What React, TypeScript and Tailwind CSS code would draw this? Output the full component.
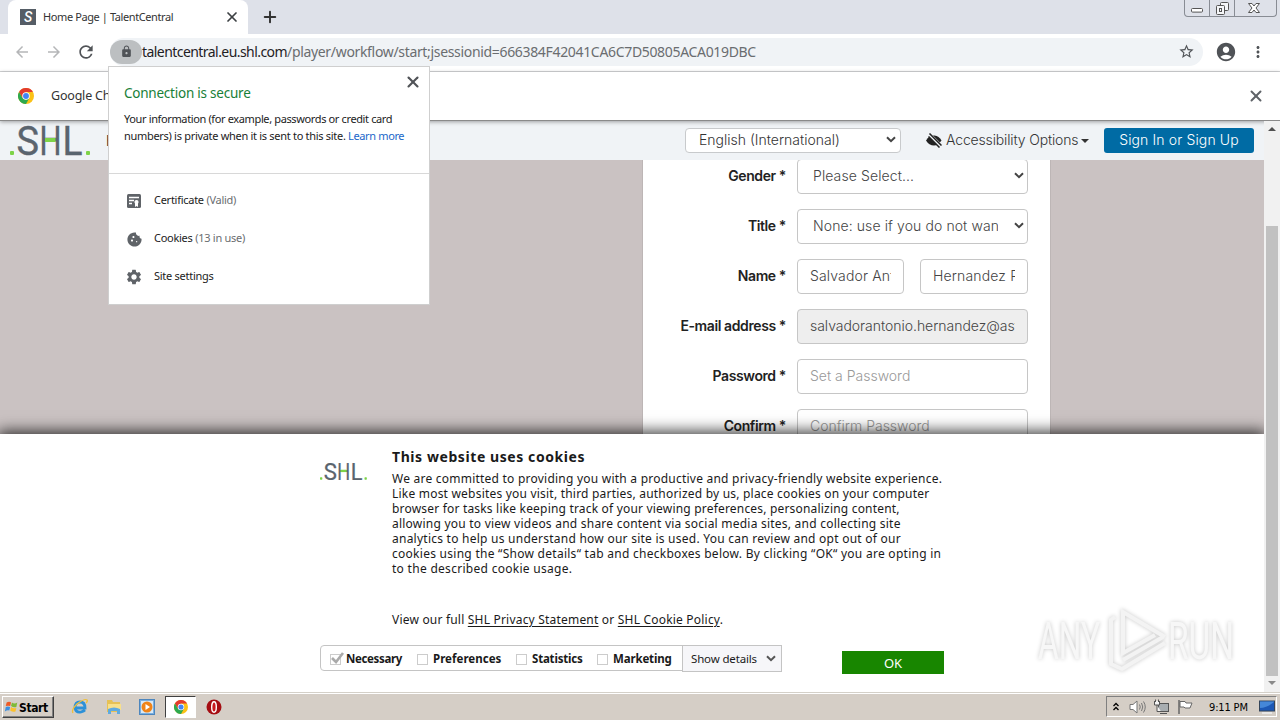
import type { ReactNode } from "react"
import clsx from "clsx"
import {
  MdAccountCircle,
  MdArrowBack,
  MdArrowForward,
  MdCookie,
  MdLock,
  MdMoreVert,
  MdRefresh,
  MdSettings,
  MdStarBorder,
} from "react-icons/md"
import { Plus, X } from "lucide-react"

const ui = "font-['Noto_Sans',sans-serif]"

function ShlLogo({ className }: { className: string }) {
  return (
    <svg viewBox="0 0 82 32" className={className} aria-label="SHL">
      <g fill="#5a646e" stroke="#5a646e" strokeWidth=".4" fontFamily="Roboto, sans-serif" fontSize="41">
        <text x="6.500" y="30" textLength="22.500" lengthAdjust="spacingAndGlyphs">S</text>
        <text x="29.500" y="30" textLength="22" lengthAdjust="spacingAndGlyphs">H</text>
        <text x="52.500" y="30" textLength="20" lengthAdjust="spacingAndGlyphs">L</text>
      </g>
      <rect x="35" y="13" width="10.500" height="4" fill="#7ed348" />
      <rect x="0" y="26" width="4" height="4" rx="1" fill="#7ed348" />
      <rect x="76" y="26" width="4" height="4" rx="1" fill="#7ed348" />
    </svg>
  )
}

function ChromeIcon({ className }: { className: string }) {
  return (
    <svg viewBox="0 0 24 24" className={className}>
      <circle cx="12" cy="12" r="12" fill="#fbc116" />
      <path d="M12 6 H22.4 A12 12 0 0 0 1.6 6 L6.8 15 Z" fill="#e33b2e" />
      <path d="M1.6 6 L6.8 15 L12 17.5 L17 15 L12 24 A12 12 0 0 1 1.6 6 Z" fill="#2da94f" />
      <circle cx="12" cy="12" r="5.6" fill="#fff" />
      <circle cx="12" cy="12" r="4.4" fill="#4285f4" />
    </svg>
  )
}

function Chevron({ className }: { className?: string }) {
  return (
    <svg viewBox="0 0 10 7" className={clsx("h-[7px] w-[10px] shrink-0", className)}>
      <path d="M1 1.2 L5 5.2 L9 1.2" fill="none" stroke="currentColor" strokeWidth="2" />
    </svg>
  )
}

function TabStrip() {
  return (
    <div className="flex h-[34px] shrink-0 bg-[#dee1e9]">
      <div className="ml-2 flex w-[240px] items-center rounded-t-lg bg-white pl-3">
        <div className="flex size-4 items-center justify-center bg-[#555d66] font-['Roboto',sans-serif] text-[14px] leading-none font-medium text-white italic">S</div>
        <span className={clsx(ui, "ml-[7px] w-[140px] text-[11px] tracking-[-0.4px] whitespace-nowrap text-[#333]")}>Home Page | TalentCentral</span>
        <X className="ml-[41px] size-4 text-[#3c4043]" strokeWidth={2.6} />
      </div>
      <Plus className="mt-2 ml-[13px] size-[18px] text-[#333]" strokeWidth={2.6} />
      <div className="mr-[3px] ml-auto flex h-[17px] w-[93px] overflow-hidden rounded-b border border-t-0 border-[#888c94] text-[#555]">
        <div className="flex w-[25px] items-center justify-center border-r border-[#888c94]">
          <svg viewBox="0 0 12 5" className="mt-1 h-[5px] w-3"><rect x=".5" y=".5" width="11" height="3.6" rx="1" fill="#fff" stroke="currentColor" /></svg>
        </div>
        <div className="flex w-[25px] items-center justify-center border-r border-[#888c94]">
          <svg viewBox="0 0 13 13" className="h-[13px] w-[13px]" fill="#f5f6f8" stroke="currentColor"><rect x="4.5" y=".5" width="8" height="8" rx="1" /><rect x=".5" y="3.5" width="8" height="9" rx="1" /><rect x="3.5" y="6.5" width="2" height="3" /></svg>
        </div>
        <div className="flex flex-1 items-center justify-center pr-[3px]">
          <svg viewBox="0 0 12 10" className="h-[10px] w-3"><path d="M.5 .5H4L6 3 8 .5H11.500L8 5 11.500 9.500H8L6 7 4 9.500H.5L4 5Z" fill="#fff" stroke="currentColor" /></svg>
        </div>
      </div>
    </div>
  )
}

function Toolbar() {
  return (
    <div className="flex h-[38px] shrink-0 items-center border-b border-[#d4d5d7] bg-white pb-[2px] pl-[13px]">
      <MdArrowBack className="size-[18px] text-[#b5b6b8]" />
      <MdArrowForward className="ml-[14px] size-[18px] text-[#b5b6b8]" />
      <MdRefresh className="ml-[13px] size-5 text-[#505357]" />
      <div className="ml-[14px] flex h-7 w-[1093px] items-center rounded-full bg-[#f0f3f6]">
        <div className="flex h-6 w-[32px] items-center justify-center rounded-full bg-[#bcbfc1]">
          <MdLock className="size-[13px] text-[#505357]" />
        </div>
        <p className={clsx(ui, "text-[14px] whitespace-nowrap text-[#6a6d70]")}>
          <span className="tracking-[-0.56px] text-[#1f2124]">talentcentral.eu.shl.com</span>
          <span className="tracking-[-0.33px]">/player/workflow/start;jsessionid=666384F42041CA6C7D50805ACA019DBC</span>
        </p>
        <MdStarBorder className="mr-2 ml-auto size-[17px] text-[#505357]" />
      </div>
      <MdAccountCircle className="ml-[12px] size-[22px] text-[#505357]" />
      <MdMoreVert className="ml-[12px] size-[18px] text-[#505357]" />
    </div>
  )
}

function InfoBar() {
  return (
    <div className="relative z-10 flex h-[49px] shrink-0 items-center border-b border-[#8a8a8a] bg-white pr-[15px] pl-[18px] shadow-[0_1px_4px_rgba(0,0,0,0.35)]">
      <ChromeIcon className="size-4" />
      <span className={clsx(ui, "ml-[17px] text-[12.500px] tracking-[-0.2px] whitespace-nowrap text-[#333]")}>Google Chrome</span>
      <X className="ml-auto size-[18px] text-[#5f6368]" strokeWidth={2.6} />
    </div>
  )
}

function SiteHeader() {
  return (
    <header className="flex h-[39px] shrink-0 items-center bg-[#f0f3f6] pl-[10px] font-['Inter',sans-serif] text-[14px] text-[#333]">
      <ShlLogo className="h-8 w-[82px]" />
      <span className="ml-[14px] w-4 overflow-hidden">Home</span>
      <div className="ml-[563px] flex h-[25px] w-[216px] items-center justify-between rounded-[4px] border border-[#c8cacc] bg-white pr-1 pb-0.5 pl-[13px] font-light">
        <span>English (International)</span>
        <Chevron className="text-[#444]" />
      </div>
      {/* low vision: solid eye crossed by two diagonal bars */}
      <svg viewBox="0 0 16 15" className="ml-[25px] h-[15px] w-4 shrink-0">
        <path d="M0 7.500Q3.500 2 8.500 2.500Q13 3 15.500 7.500Q12 12.500 8 12.500Q3 12.500 0 7.500Z" fill="#222" />
        <path d="M3 1L15 13" stroke="#f0f3f6" strokeWidth="3.600" />
        <path d="M3.500 .5L15.500 12.500M2.500 3.500L13.500 14.500" stroke="#222" strokeWidth="1.500" />
      </svg>
      <span className="mb-0.5 ml-1 w-[133px] font-light tracking-[-0.15px] whitespace-nowrap">Accessibility Options</span>
      <svg viewBox="0 0 8 4" className="ml-[2px] h-1 w-2 shrink-0"><path d="M0 0H8L4 4Z" fill="#333" /></svg>
      <div className="ml-[15px] flex h-[25px] w-[150px] items-center justify-center rounded-[3px] bg-[#006ba4] pb-0.5 font-light tracking-[0.13px] text-white">Sign In or Sign Up</div>
    </header>
  )
}

const box = "flex h-[35px] items-center overflow-hidden rounded-[4px] border border-[#c6c6c6] pb-0.5 whitespace-nowrap"

function Row({ label, children }: { label: string; children: ReactNode }) {
  return (
    <div className="flex items-center">
      <span className="w-[143px] pb-0.5 text-right text-[14px] font-semibold tracking-[-0.4px] text-[#222]">{label} *</span>
      <div className="ml-[11px] flex w-[231px] gap-4">{children}</div>
    </div>
  )
}

function Select({ value }: { value: string }) {
  return (
    <div className={clsx(box, "w-full justify-between bg-white pr-[3px] pl-[15px]")}>
      <span className="w-[185px] overflow-hidden tracking-[0.1px]">{value}</span>
      <Chevron className="text-[#444]" />
    </div>
  )
}

function Field({ value, className }: { value: string; className: string }) {
  return (
    <div className={clsx(box, "px-3", className)}>
      <span className="w-full overflow-hidden">{value}</span>
    </div>
  )
}

function RegistrationForm() {
  return (
    <main className="flex h-[274px] shrink-0 overflow-hidden bg-[#cac2c2] pl-[642px]">
      <form className="-mt-px flex h-[290px] w-[409px] shrink-0 flex-col gap-[15px] border-x border-[#bdb6b6] bg-white font-['Inter',sans-serif] text-[14px] font-light text-[#444]">
        <Row label="Gender"><Select value="Please Select..." /></Row>
        <Row label="Title"><Select value="None: use if you do not want" /></Row>
        <Row label="Name">
          <Field value="Salvador Antonio" className="w-[107px] bg-white tracking-[0.15px]" />
          <Field value="Hernandez Ramos" className="w-[108px] bg-white tracking-[0.15px]" />
        </Row>
        <Row label="E-mail address"><Field value="salvadorantonio.hernandez@astra" className="w-full bg-[#eee] tracking-[-0.03px]" /></Row>
        <Row label="Password"><Field value="Set a Password" className="w-full bg-white text-[#999]" /></Row>
        <Row label="Confirm"><Field value="Confirm Password" className="w-full bg-white text-[#999]" /></Row>
      </form>
    </main>
  )
}

const cookieLines = [
  { text: "We are committed to providing you with a productive and privacy-friendly website experience.", track: "tracking-[0.23px]" },
  { text: "Like most websites you visit, third parties, authorized by us, place cookies on your computer", track: "tracking-[0.21px]" },
  { text: "browser for tasks like keeping track of your viewing preferences, personalizing content,", track: "tracking-[0.19px]" },
  { text: "allowing you to view videos and share content via social media sites, and collecting site", track: "tracking-[0.23px]" },
  { text: "analytics to help us understand how our site is used. You can review and opt out of our", track: "tracking-[0.245px]" },
  { text: "cookies using the “Show details“ tab and checkboxes below. By clicking “OK“ you are opting in", track: "tracking-[0.27px]" },
  { text: "to the described cookie usage.", track: "tracking-[0.29px]" },
]

const cookieTypes = [
  { name: "Necessary", checked: true, width: "w-[87px]", track: "tracking-[-0.35px]" },
  { name: "Preferences", checked: false, width: "w-[99px]", track: "tracking-[0.03px]" },
  { name: "Statistics", checked: false, width: "w-[81px]", track: "tracking-[-0.2px]" },
  { name: "Marketing", checked: false, width: "w-[81px]", track: "tracking-[-0.15px]" },
]

function CookieBanner() {
  return (
    <section className={clsx(ui, "relative z-10 flex h-[258px] shrink-0 flex-col bg-white pl-[320px] text-[12px] text-[#1a1a1a] shadow-[0_-1px_14px_2px_rgba(0,0,0,0.75)]")}>
      <div className="flex h-[211px] items-start">
        <ShlLogo className="mt-[28px] h-[19px] w-[48px]" />
        <div className="ml-6 whitespace-nowrap">
          <h2 className="mt-[13px] text-[14px] leading-5 font-bold tracking-[0.58px]">This website uses cookies</h2>
          <div className="mt-1">
            {cookieLines.map((l) => (
              <p key={l.text} className={clsx("leading-[15px]", l.track)}>{l.text}</p>
            ))}
          </div>
          <p className="mt-9 leading-[15px] tracking-[0.2px]">
            View our full <a className="underline underline-offset-2">SHL Privacy Statement</a> or <a className="underline underline-offset-2">SHL Cookie Policy</a>.
          </p>
        </div>
      </div>
      <div className="flex items-start">
        <div className="flex h-[26px] w-[363px] items-center rounded-l-[4px] border border-[#c4c4c4] pt-0.5 pl-[9px]">
          {cookieTypes.map((c) => (
            <div key={c.name} className={clsx("flex items-center", c.width)}>
              <span className="relative size-[11px] border border-[#ccc] bg-white">
                {c.checked && (
                  <svg viewBox="0 0 14 12" className="absolute -top-[3px] left-0 h-3 w-[14px]"><path d="M1 6L5 10 12 1" fill="none" stroke="#aaa" strokeWidth="2.600" /></svg>
                )}
              </span>
              <span className={clsx("ml-[5px] text-[11.5px] font-bold whitespace-nowrap", c.track)}>{c.name}</span>
            </div>
          ))}
        </div>
        <div className="-ml-px flex h-[27px] w-[100px] items-center justify-between border border-[#c4c4c4] bg-[#f6f6f9] pr-[5px] pl-2 text-[11.5px] tracking-[-0.15px] whitespace-nowrap">
          Show details <Chevron className="text-[#555]" />
        </div>
        <div className="mt-[6px] ml-[60px] flex h-[23px] w-[102px] items-center justify-center bg-[#188600] pt-0.5 text-[13px] text-white">OK</div>
      </div>
    </section>
  )
}

function Scrollbar() {
  return (
    <div className="relative z-20 flex w-4 flex-col items-center bg-[#f1f1f1]">
      <svg viewBox="0 0 8 4" className="mt-[6px] h-1 w-2"><path d="M0 4H8L4 0Z" fill="#505050" /></svg>
      <div className="mt-[95px] h-[450px] w-3 bg-[#c1c1c1]" />
      <svg viewBox="0 0 8 4" className="mt-[5px] h-1 w-2"><path d="M0 0H8L4 4Z" fill="#8a8a8a" /></svg>
    </div>
  )
}

const popoverItems = [
  { icon: <svg viewBox="0 0 14 14" className="size-[14px]"><rect width="14" height="14" rx="1.500" fill="#5f6368" /><path d="M2 3.500H12M2 6.500H7M2 9.500H5" stroke="#fff" strokeWidth="1.300" /><circle cx="9.500" cy="8" r="2.100" fill="#fff" /><path d="M8 9H11V13L9.500 12 8 13Z" fill="#fff" /></svg>, label: "Certificate", note: "(Valid)" },
  { icon: <MdCookie className="size-[17px]" />, label: "Cookies", note: "(13 in use)" },
  { icon: <MdSettings className="size-[18px]" />, label: "Site settings", note: "" },
]

function SecurityPopover() {
  return (
    <div className={clsx(ui, "absolute top-[66px] left-[108px] z-30 flex h-[239px] w-[322px] flex-col border border-[#cfcfcf] bg-white text-[11px] text-[#222]")}>
      <div className="flex h-[107px] border-b border-[#d8d8d8] pl-[15px]">
        <div className="w-[280px] pt-[17px] whitespace-nowrap">
          <h3 className="text-[13.500px] leading-[19px] tracking-[-0.23px] text-[#188038]">Connection is secure</h3>
          <p className="mt-[7px] leading-[17px] tracking-[-0.37px]">
            Your information (for example, passwords or credit card
            <br />
            <span className="tracking-[-0.3px]">numbers) is private when it is sent to this site. </span>
            <a className="text-[#1a66c9]">Learn more</a>
          </p>
        </div>
        <X className="mt-[6px] size-[18px] text-[#505357]" strokeWidth={2.8} />
      </div>
      <ul className="flex flex-col pt-2">
        {popoverItems.map((item) => (
          <li key={item.label} className="flex h-[38px] items-center pl-4 tracking-[-0.27px]">
            <span className="flex w-[18px] items-center justify-center text-[#5f6368]">{item.icon}</span>
            <span className="mb-0.5 ml-[11px]">{item.label} <span className="text-[#6a6d70]">{item.note}</span></span>
          </li>
        ))}
      </ul>
    </div>
  )
}

function Watermark() {
  return (
    <svg viewBox="0 0 200 66" className="absolute top-[607px] left-[1036px] z-20 h-[66px] w-[200px] drop-shadow-[0_0_2px_rgba(0,0,0,0.22)]">
      <g fill="#f7f7f7" fontFamily="Roboto, sans-serif" fontSize="51">
        <text x="2" y="52" textLength="62" lengthAdjust="spacingAndGlyphs">ANY</text>
        <text x="132" y="52" textLength="66" lengthAdjust="spacingAndGlyphs">RUN</text>
      </g>
      <g fill="none" stroke="#f3f3f3" strokeWidth="4">
        <path d="M87 46V5L129 30" />
        <path d="M87 14V46L119 28" />
        <path d="M79 10L75 13V57L86 62L129 36" />
        <path d="M87 53L127 30" />
      </g>
    </svg>
  )
}

function Taskbar() {
  return (
    <footer className="flex h-7 shrink-0 items-center border-t border-[#d4d0c8] bg-[#d5cec6] pl-[2px] font-['DejaVu_Sans_Condensed','DejaVu_Sans',sans-serif] text-[11px] text-black shadow-[inset_0_1px_0_#fff]">
      <div className="flex h-[22px] w-[52px] items-center border border-t-white border-r-[#404040] border-b-[#404040] border-l-white pl-px text-[12px] font-bold shadow-[inset_-1px_-1px_0_#808080]">
        <svg viewBox="0 0 17 16" className="h-4 w-[15px] shrink-0">
          <path d="M3 3Q6 1 8 3L7 7Q5 6 2 7Z" fill="#ee5a24" />
          <path d="M9 3Q12 5 15 3L14 8Q11 9 8 7Z" fill="#7fba36" />
          <path d="M2 8Q4 7 7 8L6 12Q4 11 1 13Z" fill="#3d8fe0" />
          <path d="M8 8Q11 10 14 9L13 13Q10 14 7 12Z" fill="#fbc02d" />
        </svg>
        <span className="pt-0.5 leading-none tracking-[-0.4px]">Start</span>
      </div>
      <svg viewBox="0 0 18 18" className="ml-[17px] size-[18px]">
        <path d="M4 10H14Q14 4 9 4Q4 4 4 10Q5 15 10 14Q13 13 14 12" fill="none" stroke="#2d91d8" strokeWidth="2.800" />
        <path d="M2 15Q0 12 6 6Q14 0 16 2Q17 3 15 5" fill="none" stroke="#efbf3a" strokeWidth="1.300" />
      </svg>
      <svg viewBox="0 0 18 18" className="ml-4 size-[18px]">
        <path d="M2 2H7L8 4H15V14H2Z" fill="#e6c155" />
        <path d="M3 6H16V12H3Z" fill="#f8e08a" />
        <path d="M3 16V11Q9 8 15 11V16H12V13H6V16Z" fill="#5faadf" />
      </svg>
      <svg viewBox="0 0 16 16" className="ml-4 size-4">
        <rect x=".5" y=".5" width="15" height="15" fill="#79afe0" stroke="#4d86bd" />
        <rect x="2" y="2" width="12" height="12" fill="#d9e9f6" />
        <circle cx="8" cy="8" r="5.500" fill="#f08418" />
        <path d="M6.500 5V11L11 8Z" fill="#fff" />
      </svg>
      <div className="ml-[10px] flex h-[22px] w-[31px] items-center justify-center border border-t-[#404040] border-r-white border-b-white border-l-[#404040] bg-white">
        <ChromeIcon className="size-[14px]" />
      </div>
      <svg viewBox="0 0 16 16" className="ml-[10px] size-4">
        <circle cx="8" cy="8" r="7.500" fill="#a50d12" />
        <ellipse cx="8" cy="8" rx="2.300" ry="5.200" fill="#c9191d" stroke="#fff" strokeWidth="1.400" />
      </svg>
      <div className="mr-[3px] ml-auto flex h-[21px] w-[171px] items-center border border-t-[#808080] border-r-white border-b-white border-l-[#808080]">
        <svg viewBox="0 0 6 9" className="ml-[6px] h-[9px] w-[6px]"><path d="M.5 4L3 1.500 5.500 4M.5 8L3 5.500 5.500 8" fill="none" stroke="#000" strokeWidth="1.300" /></svg>
        <svg viewBox="0 0 17 16" className="ml-[10px] h-4 w-[17px]" fill="#fff" stroke="#777"><path d="M1 5.500H4L8 2V14L4 10.500H1Z" /><path d="M10.500 5.500Q12 8 10.500 10.500M12.500 4Q15 8 12.500 12M14.500 2.500Q18 8 14.500 13.500" fill="none" /></svg>
        <svg viewBox="0 0 17 16" className="ml-[7px] h-4 w-[17px]" fill="#f3f3f3" stroke="#555"><rect x="5.500" y="4.500" width="10" height="8" fill="#a8adb0" /><path d="M7 14.500H14" /><path d="M1.500 2V6H6.500V2M2.500 .5V3M5.500 .5V3M4 6V12.500H8" /></svg>
        <svg viewBox="0 0 16 16" className="ml-[7px] size-4" fill="#fff" stroke="#666"><path d="M2 1V15" strokeWidth="1.500" /><path d="M3 2.500H8L9 4H15L13 9H8L7 8H3Z" /></svg>
        <span className="ml-4 pt-[3px] tracking-[-0.15px] whitespace-nowrap">9:11 PM</span>
        <svg viewBox="0 0 16 14" className="ml-[11px] h-[14px] w-4 shrink-0"><rect x=".5" y="1" width="15" height="10" fill="#1d58b5" stroke="#34455a" /><path d="M1 8Q8 8 15 2V1.500H1Z" fill="#4587d8" /><path d="M3 13H13" stroke="#eee" strokeWidth="1.500" /></svg>
      </div>
    </footer>
  )
}

export default function App() {
  return (
    <div className="relative flex h-[720px] w-[1280px] flex-col overflow-hidden bg-white">
      <TabStrip />
      <Toolbar />
      <InfoBar />
      <div className="flex h-[571px] shrink-0">
        <div className="flex w-[1264px] flex-col overflow-hidden">
          <SiteHeader />
          <RegistrationForm />
          <CookieBanner />
        </div>
        <Scrollbar />
      </div>
      <Taskbar />
      <SecurityPopover />
      <Watermark />
    </div>
  )
}
